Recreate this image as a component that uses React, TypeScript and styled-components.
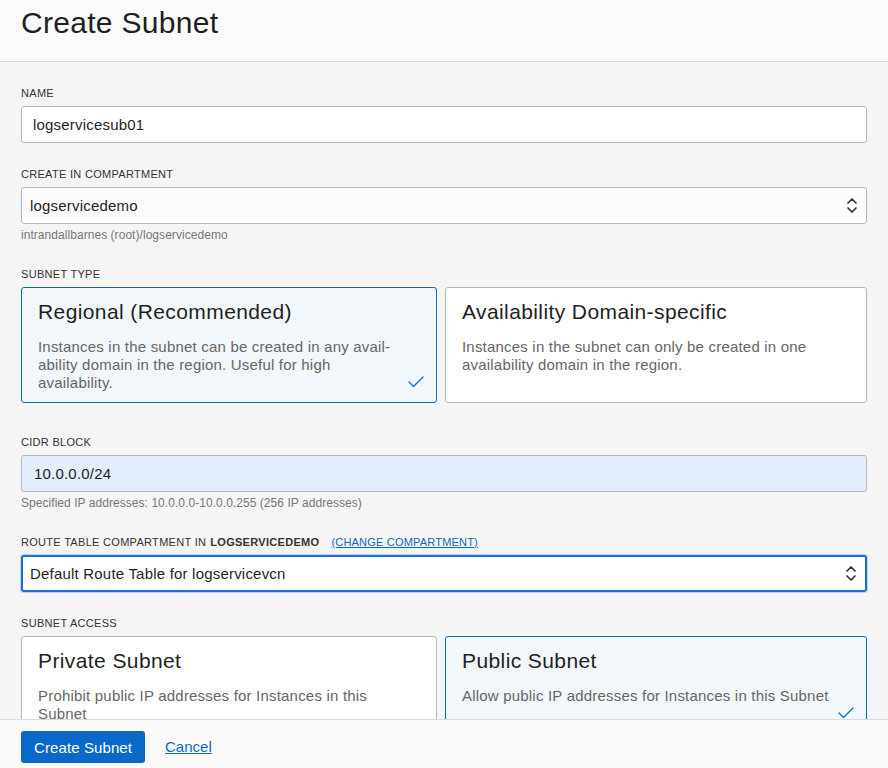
import React from "react";
import styled, { createGlobalStyle } from "styled-components";

const Global = createGlobalStyle`
  html, body { margin: 0; padding: 0; }
  body {
    font-family: "Liberation Sans", Arial, sans-serif;
    background: #f5f5f5;
    color: #222;
  }
  * { box-sizing: border-box; }
`;

const Page = styled.div`
  height: 100vh;
  display: flex;
  flex-direction: column;
  overflow: hidden;
  background: #f5f5f5;
`;

const Header = styled.header`
  height: 62px;
  flex: 0 0 62px;
  background: #fbfbfb;
  border-bottom: 1px solid #dcdcdc;
  padding: 0 21px;
  display: flex;
  align-items: center;
`;

const Title = styled.h1`
  margin: 0 0 16px 0;
  font-size: 30px;
  font-weight: 400;
  letter-spacing: 0.3px;
  color: #1f1f1f;
  line-height: 36px;
`;

const Main = styled.main`
  flex: 1 1 auto;
  overflow: hidden;
  padding: 24px 21px 0 21px;
`;

const Field = styled.div<{ $gap?: number }>`
  margin-bottom: ${(p) => p.$gap ?? 24}px;
`;

const Label = styled.div`
  font-size: 11px;
  line-height: 14px;
  letter-spacing: 0.3px;
  color: #333;
  text-transform: uppercase;
  margin-bottom: 6px;
  display: flex;
  align-items: baseline;
`;

const Strong = styled.span`
  font-weight: 700;
  margin-left: 4px;
`;

const LabelLink = styled.a`
  margin-left: 12px;
  color: #0a6ad0;
  text-decoration: underline;
  letter-spacing: 0.2px;
`;

const Input = styled.div<{ $filled?: boolean }>`
  height: 37px;
  border: 1px solid #b3b8c0;
  border-radius: 3px;
  background: ${(p) => (p.$filled ? "#e4edfb" : "#ffffff")};
  padding: 0 ${(p) => (p.$filled ? 12 : 11)}px;
  display: flex;
  align-items: center;
  font-size: 15px;
  letter-spacing: 0.2px;
  color: #1f1f1f;
`;

const Select = styled.div<{ $focused?: boolean }>`
  height: 37px;
  border: ${(p) => (p.$focused ? "2px solid #1c6fd6" : "1px solid #b3b8c0")};
  box-shadow: ${(p) => (p.$focused ? "0 0 0 1px #bcd5f4" : "none")};
  border-radius: 3px;
  background: ${(p) => (p.$focused ? "#ffffff" : "#fcfcfc")};
  padding: 0 8px 0 ${(p) => (p.$focused ? 7 : 8)}px;
  display: flex;
  align-items: center;
  justify-content: space-between;
  font-size: 15px;
  letter-spacing: 0.2px;
  color: #1f1f1f;
`;

const Help = styled.div`
  margin-top: 3px;
  font-size: 12px;
  line-height: 16px;
  letter-spacing: 0.05px;
  color: #777;
`;

const CardGrid = styled.div`
  display: grid;
  grid-template-columns: 416px 1fr;
  gap: 8px;
`;

const Card = styled.div<{ $selected?: boolean }>`
  position: relative;
  border: 1px solid ${(p) => (p.$selected ? "#0b6bcb" : "#b3b8c0")};
  border-radius: 3px;
  background: ${(p) => (p.$selected ? "#f2f7fc" : "#ffffff")};
  padding: 10px 33px 10px 16px;
`;

const CardTitle = styled.div`
  font-size: 21px;
  line-height: 28px;
  letter-spacing: 0.4px;
  color: #1f1f1f;
  margin-bottom: 12px;
`;

const CardText = styled.div`
  font-size: 15px;
  line-height: 18px;
  letter-spacing: 0.2px;
  color: #666;
`;

const Check = styled.svg`
  position: absolute;
  right: 12px;
  bottom: 14px;
  width: 16px;
  height: 12px;
`;

const Footer = styled.footer`
  flex: 0 0 49px;
  height: 49px;
  border-top: 1px solid #dcdcdc;
  background: #fafafa;
  padding: 11px 21px 0 21px;
  display: flex;
  align-items: flex-start;
  gap: 20px;
`;

const PrimaryButton = styled.button`
  height: 32px;
  padding: 0 13px;
  border: none;
  border-radius: 3px;
  background: #0a68c9;
  color: #fff;
  font-family: "Liberation Sans", Arial, sans-serif;
  font-size: 15px;
  letter-spacing: 0.1px;
  cursor: pointer;
`;

const LinkButton = styled.a`
  font-size: 15px;
  line-height: 32px;
  color: #0a6ad0;
  text-decoration: underline;
`;

const Chevrons = () => (
  <svg width="12" height="17" viewBox="0 0 12 17" fill="none">
    <polyline points="2,6 6,2 10,6" stroke="#333" strokeWidth="1.7" strokeLinecap="round" strokeLinejoin="round" />
    <polyline points="2,11 6,15 10,11" stroke="#333" strokeWidth="1.7" strokeLinecap="round" strokeLinejoin="round" />
  </svg>
);

const CheckMark = () => (
  <Check viewBox="0 0 16 12" fill="none">
    <polyline points="1,6 5.5,10.5 15,1" stroke="#1a6fd2" strokeWidth="1.4" strokeLinecap="round" strokeLinejoin="round" />
  </Check>
);

type Option = { title: string; text: string; selected?: boolean };

const OptionCard = ({ title, text, selected }: Option) => (
  <Card $selected={selected}>
    <CardTitle>{title}</CardTitle>
    <CardText>{text}</CardText>
    {selected && <CheckMark />}
  </Card>
);

export default function App() {
  return (
    <>
      <Global />
      <Page>
        <Header>
          <Title>Create Subnet</Title>
        </Header>
        <Main>
          <Field>
            <Label>Name</Label>
            <Input>logservicesub01</Input>
          </Field>
          <Field>
            <Label>Create in Compartment</Label>
            <Select>
              <span>logservicedemo</span>
              <Chevrons />
            </Select>
            <Help>intrandallbarnes (root)/logservicedemo</Help>
          </Field>
          <Field $gap={32}>
            <Label>Subnet Type</Label>
            <CardGrid>
              <OptionCard
                selected
                title="Regional (Recommended)"
                text={"Instances in the subnet can be created in any avail\u00ADability domain in the region. Useful for high availability."}
              />
              <OptionCard
                title="Availability Domain-specific"
                text="Instances in the subnet can only be created in one availability domain in the region."
              />
            </CardGrid>
          </Field>
          <Field>
            <Label>CIDR Block</Label>
            <Input $filled>10.0.0.0/24</Input>
            <Help>Specified IP addresses: 10.0.0.0-10.0.0.255 (256 IP addresses)</Help>
          </Field>
          <Field>
            <Label>
              Route Table Compartment in<Strong>logservicedemo</Strong>
              <LabelLink href="#">(Change Compartment)</LabelLink>
            </Label>
            <Select $focused>
              <span>Default Route Table for logservicevcn</span>
              <Chevrons />
            </Select>
          </Field>
          <Field>
            <Label>Subnet Access</Label>
            <CardGrid>
              <OptionCard
                title="Private Subnet"
                text="Prohibit public IP addresses for Instances in this Subnet"
              />
              <OptionCard
                selected
                title="Public Subnet"
                text="Allow public IP addresses for Instances in this Subnet"
              />
            </CardGrid>
          </Field>
        </Main>
        <Footer>
          <PrimaryButton>Create Subnet</PrimaryButton>
          <LinkButton href="#">Cancel</LinkButton>
        </Footer>
      </Page>
    </>
  );
}
